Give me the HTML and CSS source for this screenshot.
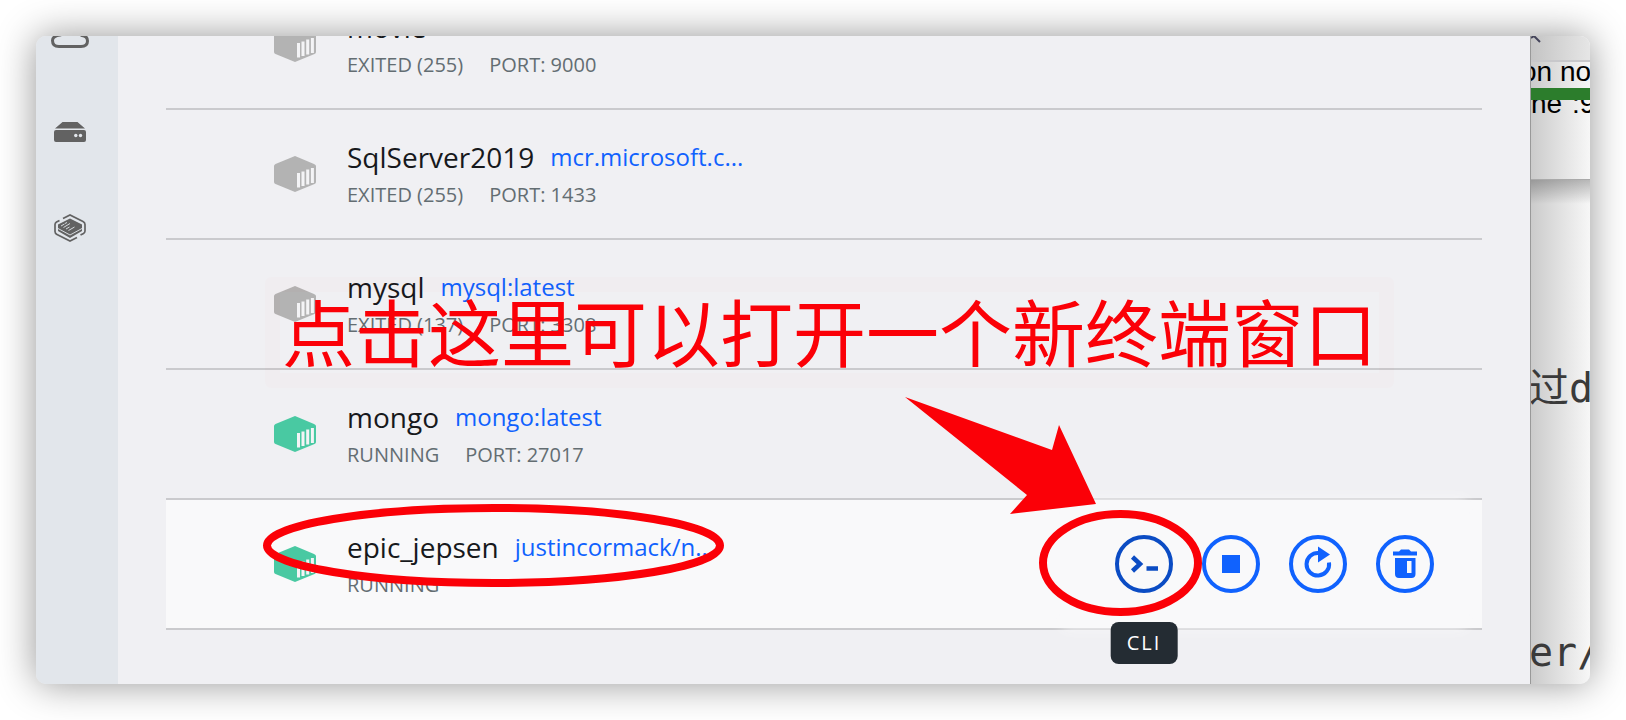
FILE: index.html
```
<!DOCTYPE html>
<html lang="en">
<head>
    <meta charset="UTF-8">
    <meta name="viewport" content="width=device-width, initial-scale=1.0">
    <title>Containers / Apps</title>
    <link rel="stylesheet" href="styles.css">
</head>
<body>
    <svg class="defs" width="0" height="0" aria-hidden="true">
        <symbol id="box" viewBox="0 0 42 36">
            <path fill="currentColor" d="M21 0 L40 8 Q42 9 42 10 V26 Q42 27.500 40.500 28 L21 36 L1.500 28 Q0 27.500 0 26 V10 Q0 9 1.500 8 Z"/>
            <path class="slats" d="M24.500 17V31.500M29 15.500V30M33.700 13.500V28.500M38.400 12V27"/>
        </symbol>
    </svg>
    <div class="window">
        <nav class="sidebar">
            <a href="#cloud" aria-label="Cloud">
                <svg width="38" height="28" viewBox="0 0 38 28"><path fill="none" stroke="#626262" stroke-width="3" d="M9 15 Q1.500 16 1.500 20.500 Q1.500 26.500 8 26.500 H30 Q36.500 26.500 36.500 21 Q36.500 16 31 15.500 Q31 2 19 2 Q10 2 9 15Z"/></svg>
            </a>
            <a href="#volumes" aria-label="Volumes">
                <svg width="32" height="20" viewBox="0 0 32 20"><path fill="#626262" d="M8.500 0 H23.500 L31 6.500 H1 Z M2 8 H30 Q32 8 32 10 V18 Q32 20 30 20 H2 Q0 20 0 18 V10 Q0 8 2 8Z"/><circle cx="21.800" cy="13.500" r="1.700" fill="#e2e6eb"/><circle cx="26.500" cy="13.500" r="1.700" fill="#e2e6eb"/></svg>
            </a>
            <a href="#images" aria-label="Images">
                <svg width="32" height="28" viewBox="0 0 32 28"><path fill="none" stroke="#626262" stroke-width="1.700" d="M9 4.500 L16 1 L29 7.500 Q31 8.500 31 10.500 V17 Q31 18.500 29.500 19.500 L26.500 21 M23 23.500 L16 27 L3 20.500 Q1 19.500 1 17.500 V10.500 Q1 9 2.500 8 L5.500 6.500"/><path fill="#626262" d="M16 4.500 L28 10.500 V17 L16 24 L4 17 V10.500Z"/><path stroke="#e2e6eb" stroke-width="0.900" d="M7 12 L10.500 10 M9.500 13.500 L16 9.500 M12 15 L15.500 13 M14.500 16.500 L20.500 13 M11 9.500 L13 8.500 M4 14.500 L16 21 L28 14.500" fill="none"/></svg>
            </a>
        </nav>
        <main class="main">
            <ul class="containers">
                <li class="row">
                    <svg class="box" width="42" height="36"><use href="#box"/></svg>
                    <div class="info">
                        <div class="title"><span class="name">movie</span><a class="image faded" href="#movie">movie:v1</a></div>
                        <div class="status"><span>EXITED (255)</span><span>PORT: 9000</span></div>
                    </div>
                </li>
                <li class="row">
                    <svg class="box" width="42" height="36"><use href="#box"/></svg>
                    <div class="info">
                        <div class="title"><span class="name">SqlServer2019</span><a class="image" href="#mssql">mcr.microsoft.c...</a></div>
                        <div class="status"><span>EXITED (255)</span><span>PORT: 1433</span></div>
                    </div>
                </li>
                <li class="row">
                    <svg class="box" width="42" height="36"><use href="#box"/></svg>
                    <div class="info">
                        <div class="title"><span class="name">mysql</span><a class="image" href="#mysql">mysql:latest</a></div>
                        <div class="status"><span>EXITED (137)</span><span>PORT: 3308</span></div>
                    </div>
                </li>
                <li class="row">
                    <svg class="box running" width="42" height="36"><use href="#box"/></svg>
                    <div class="info">
                        <div class="title"><span class="name">mongo</span><a class="image" href="#mongo">mongo:latest</a></div>
                        <div class="status"><span>RUNNING</span><span>PORT: 27017</span></div>
                    </div>
                </li>
                <li class="row active">
                    <svg class="box running" width="42" height="36"><use href="#box"/></svg>
                    <div class="info">
                        <div class="title"><span class="name">epic_jepsen</span><a class="image" href="#nsenter">justincormack/n...</a></div>
                        <div class="status"><span>RUNNING</span></div>
                    </div>
                    <div class="actions">
                        <button class="cli" type="button" aria-label="CLI" aria-describedby="cli-tip">
                            <svg width="50" height="50" viewBox="0 0 50 50"><path fill="none" stroke="currentColor" stroke-width="4.500" d="M13.500 18 L21 25 L13.500 32 M27.500 29.500 H39"/></svg>
                            <span class="tooltip" id="cli-tip" role="tooltip">CLI</span>
                        </button>
                        <button type="button" aria-label="Stop">
                            <svg width="50" height="50" viewBox="0 0 50 50"><path fill="currentColor" d="M16 16H34V34H16Z"/></svg>
                        </button>
                        <button type="button" aria-label="Restart">
                            <svg width="50" height="50" viewBox="0 0 50 50"><path fill="none" stroke="currentColor" stroke-width="4" d="M26 14 A11.300 11.300 0 1 0 36 23.500"/><path fill="currentColor" d="M25 7.500 L37 15.500 L25 23.500Z"/></svg>
                        </button>
                        <button type="button" aria-label="Delete">
                            <svg width="50" height="50" viewBox="0 0 50 50"><path fill="currentColor" fill-rule="evenodd" d="M13 12.500 H19 L21 10.500 H29 L31 12.500 H37 V16.500 H13Z M15 19 H35.500 V35 Q35.500 39 31.500 39 H19 Q15 39 15 35Z M27 22 V34 H31.500 V22Z"/></svg>
                        </button>
                    </div>
                </li>
            </ul>
        </main>
        <aside class="behind">
            <div class="toolbar">
                <svg width="10" height="8" viewBox="0 0 10 8"><path fill="none" stroke="#44445a" stroke-width="2" d="M0 2 L3 0 L9 6"/></svg>
            </div>
            <div class="terminal">
                <div class="line">on now</div>
                <div class="bar"></div>
                <div class="line cut">ne":9</div>
            </div>
            <div class="article">
                <p>过docker</p>
                <p>er/</p>
            </div>
        </aside>
    </div>

    <!-- annotations drawn over the window -->
    <div class="note">点击这里可以打开一个新终端窗口</div>
    <svg class="marks" width="1626" height="720" viewBox="0 0 1626 720" aria-hidden="true">
        <path fill="#fb0007" d="M905 397 L1052 450 L1059 425 L1096 504 L1010 514 L1027 495Z"/>
        <ellipse cx="493.500" cy="545.500" rx="226.500" ry="37.500"/>
        <ellipse cx="1120.500" cy="563" rx="77.500" ry="49"/>
    </svg>
</body>
</html>
```
FILE: styles.css
```
* {
    box-sizing: border-box;
}
body {
    font-family: "Open Sans", "Noto Sans CJK SC", sans-serif;
    margin: 0;
    padding: 36px;
    height: 100vh;
    display: flex;
    background-color: #fff;
    position: relative;
    overflow: hidden;
}
.defs {
    position: absolute;
}
.window {
    flex: 1;
    display: flex;
    min-width: 0;
    overflow: hidden;
    border-radius: 10px;
    background-color: #f0f0f3;
    box-shadow: 0 0 38px rgba(0, 0, 0, 0.42);
}

/* sidebar */
.sidebar {
    flex: 0 0 82px;
    padding-right: 14px;
    background-color: #e2e6eb;
}
.sidebar a {
    display: flex;
    align-items: center;
    justify-content: center;
    height: 96px;
}
.sidebar a:first-child {
    height: 48px;
    align-items: flex-start;
    margin-top: -16px;
    margin-bottom: 16px;
}

/* container list, scrolled to the end */
.main {
    flex: 1;
    min-width: 0;
    display: flex;
    flex-direction: column;
    justify-content: flex-end;
    padding: 0 48px 54px;
}
.containers {
    list-style: none;
    margin: 0;
    padding: 0;
}
.row {
    display: flex;
    align-items: center;
    height: 130px;
    padding-left: 108px;
    border-bottom: 2px solid #cacacd;
}
.row.active {
    background-color: #f9f9fa;
}
.box {
    color: #b3b3b3;
    margin-right: 31px;
}
.box.running {
    color: #49c9a2;
}
.slats {
    fill: none;
    stroke: #f4f4f6;
    stroke-width: 3;
}
.info {
    flex: 1;
    padding-top: 4px;
}
.title {
    display: flex;
    align-items: center;
    gap: 16px;
    line-height: 38px;
}
.name {
    font-size: 28px;
    color: #17191c;
}
.image {
    font-size: 24px;
    color: #1062fe;
    text-decoration: none;
}
.image.faded {
    opacity: 0.3;
}
.status {
    display: flex;
    gap: 26px;
    font-size: 20px;
    line-height: 38px;
    color: #636d72;
}

/* action buttons */
.actions {
    display: flex;
    align-items: center;
    gap: 29px;
    align-self: stretch;
    margin-right: 16px;
    padding: 0 32px 0 52px;
    background-color: #f9f9fa;
    box-shadow: 0 0 12px #f9f9fa;
}
.actions button {
    position: relative;
    width: 58px;
    height: 58px;
    padding: 0;
    border: 4px solid #1062fe;
    border-radius: 50%;
    background: none;
    color: #1062fe;
}
.actions button svg {
    display: block;
}
.actions .cli {
    color: #0b4cc4;
    border-color: #0b4cc4;
}
.tooltip {
    position: absolute;
    top: 83px;
    left: 50%;
    transform: translateX(-50%);
    padding: 0 16px;
    border-radius: 8px;
    background-color: #242c33;
    color: #fff;
    font-family: "Open Sans", sans-serif;
    font-size: 20px;
    line-height: 42px;
    letter-spacing: 2px;
}

/* windows seen behind */
.behind {
    flex: 0 0 60px;
    display: flex;
    flex-direction: column;
    overflow: hidden;
    white-space: nowrap;
    border-left: 1px solid #999;
    background: linear-gradient(to right, #cbcbcb, #f7f7f7);
}
.toolbar {
    height: 26px;
    border-bottom: 2px solid #c8c8cb;
    background: linear-gradient(to right, #c4c4c4, #e6e6e6);
}
.toolbar svg {
    display: block;
}
.terminal {
    height: 118px;
    font-family: "Liberation Sans", sans-serif;
    font-size: 28px;
    line-height: 20px;
    color: #000;
    border-bottom: 1px solid #aaa;
}
.line {
    height: 26px;
    margin-left: -10px;
}
.bar {
    height: 12px;
    background-color: #2c7d2c;
}
.line.cut {
    margin-left: 0;
    overflow: hidden;
    line-height: 8px;
}
.article {
    flex: 1;
    display: flex;
    flex-direction: column;
    gap: 204px;
    padding-top: 178px;
    background: linear-gradient(to bottom, rgba(0, 0, 0, 0.25), rgba(0, 0, 0, 0) 24px);
    font-family: "DejaVu Sans Mono", "Noto Sans CJK SC", monospace;
    font-size: 40px;
    line-height: 60px;
    color: #3a3a3a;
}
.article p {
    margin: 0 0 0 -2px;
}

/* annotations */
.note {
    position: absolute;
    left: 265px;
    top: 277px;
    padding: 0 2px 6px;
    border: 15px solid rgba(255, 0, 0, 0.012);
    border-radius: 6px;
    font-family: "Noto Sans CJK SC", sans-serif;
    font-size: 73px;
    line-height: 75px;
    white-space: nowrap;
    color: #fb0007;
}
.marks {
    position: absolute;
    left: 0;
    top: 0;
    pointer-events: none;
}
.marks ellipse {
    fill: none;
    stroke: #fb0007;
    stroke-width: 8;
}
```
